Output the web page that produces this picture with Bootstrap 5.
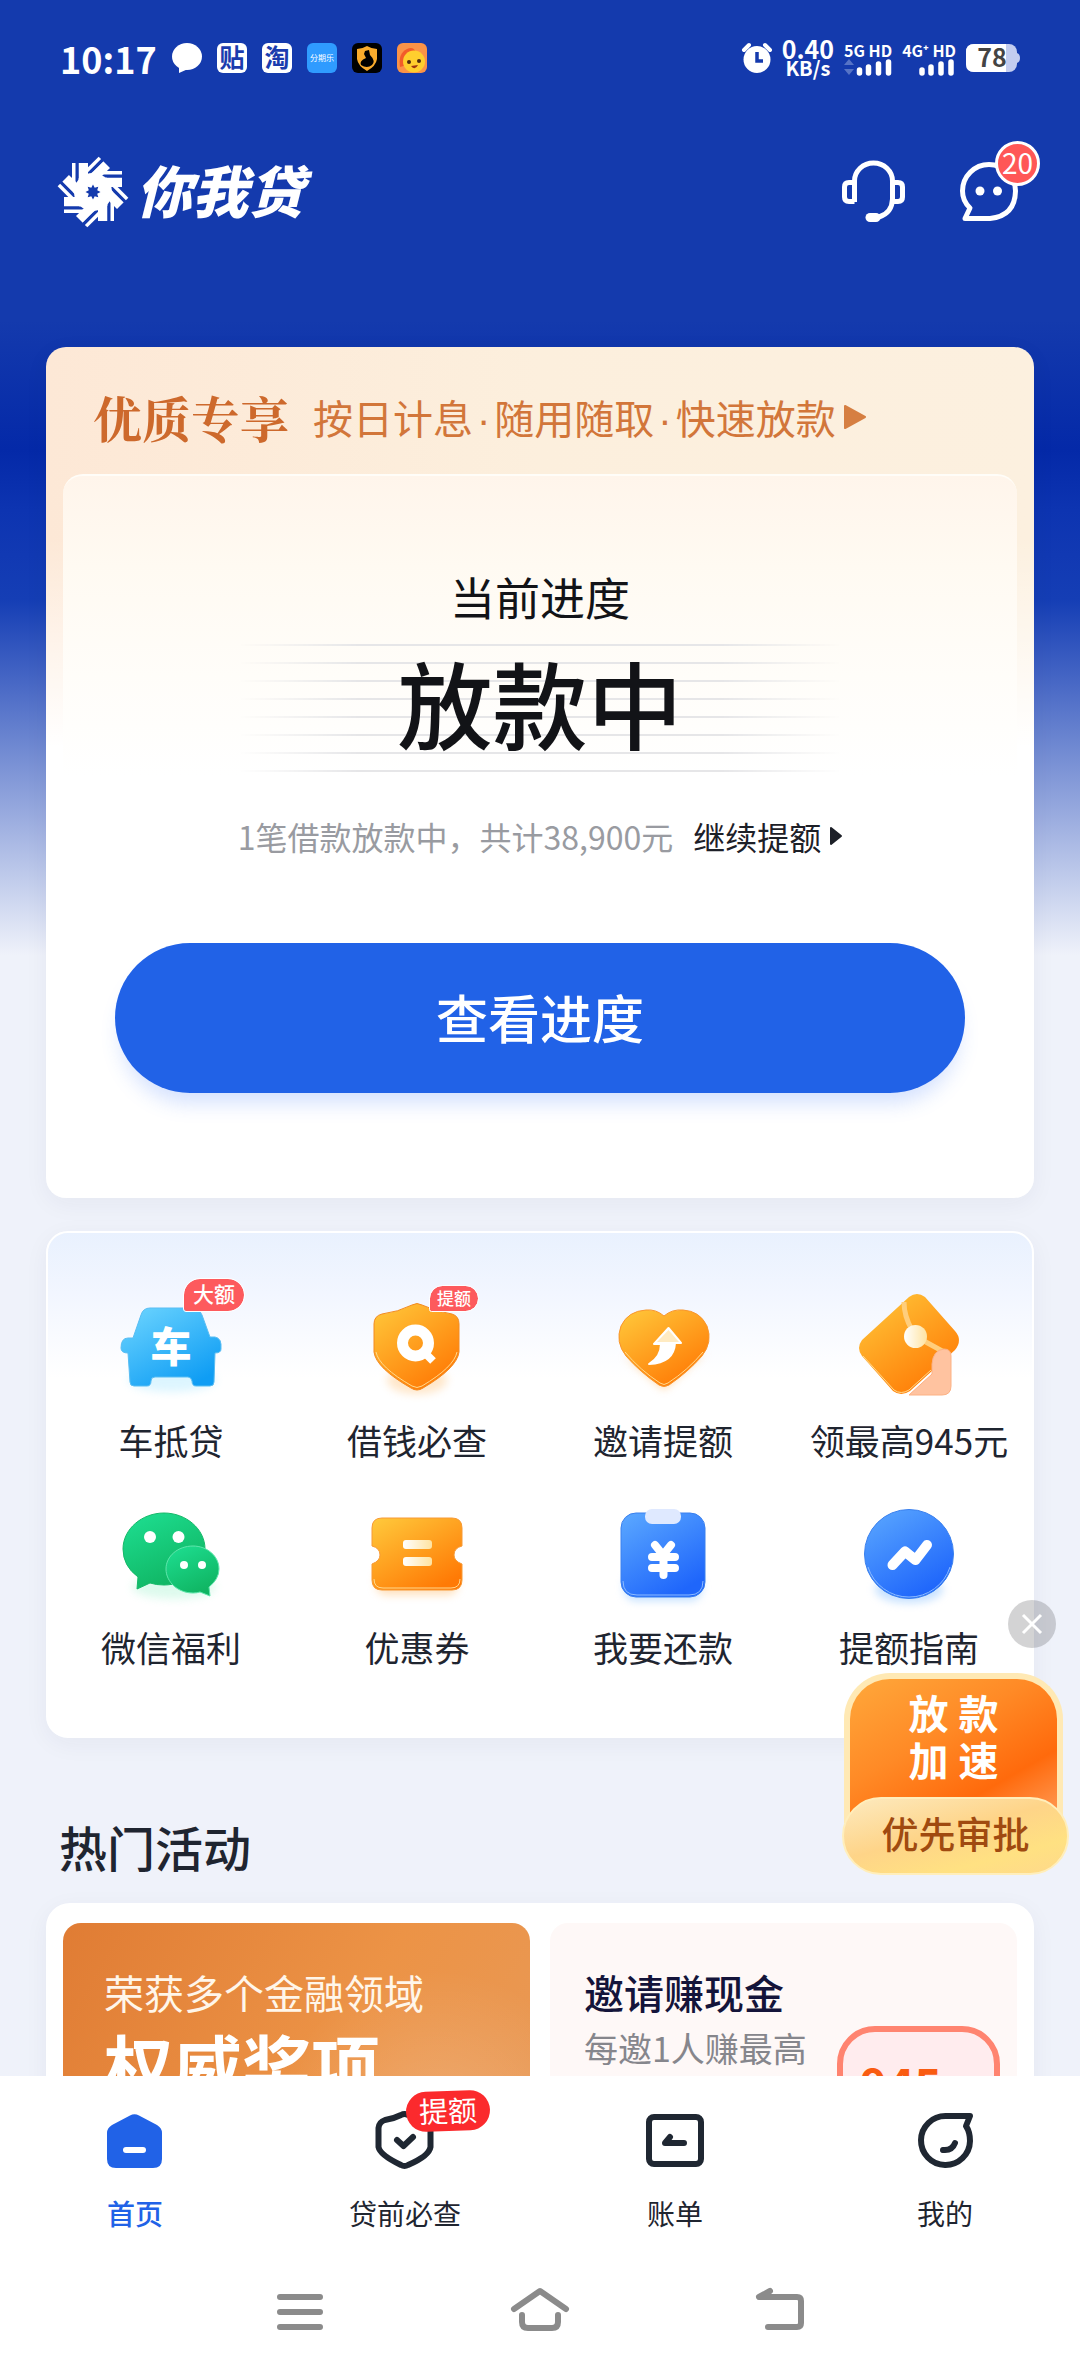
<!DOCTYPE html>
<html lang="zh-CN">
<head>
<meta charset="utf-8">
<meta name="viewport" content="width=device-width, initial-scale=1">
<title>你我贷</title>
<link href="https://cdn.jsdelivr.net/npm/bootstrap@5.3.0/dist/css/bootstrap.min.css" rel="stylesheet">
<style>
  body { font-family: "Noto Sans CJK SC", "Noto Sans", sans-serif; color: #1f2530; background: #eff2fa; }
  a { color: inherit; text-decoration: none; }
  svg { display: block; flex: none; overflow: visible; }
  button { font-family: inherit; }
  .bare-btn { border: 0; background: none; padding: 0; color: inherit; }
  .app-main { min-height: 0; background: #eff2fa linear-gradient(180deg, #143aad 0, #143aad 320px, #0429a8 450px, #0d34b1 510px, #153eb5 600px, #eff2fa 955px) no-repeat; }

  .status-bar { height: 116px; padding: 0 60px; color: #fff; }
  .clock-text { font-size: 36px; font-weight: 700; line-height: 40px; margin-right: 15px; }
  .app-icons { gap: 15px; }
  .sys-status { gap: 10px; }
  .rate-text { font-size: 25px; font-weight: 700; line-height: 20px; text-align: center; }
  .rate-text span { display: block; }
  .rate-text .unit { font-size: 20px; }
  .net-text { font-size: 16px; font-weight: 700; line-height: 18px; }

  .brand-bar { height: 152px; padding: 0 62px 0 58px; color: #fff; }
  .brand-name { font-size: 56px; font-weight: 900; font-style: italic; line-height: 64px; margin: 0 0 6px 8px; }
  .brand-actions { gap: 54px; }
  .count-badge { top: -21px; right: -22px; width: 45px; height: 45px; border: 3px solid #fff; background: #ff5757; font-size: 28px; line-height: 37px; font-weight: 400; text-align: center; }

  .content-wrap { padding: 79px 46px 0; }
  .panel { border-radius: 20px; box-shadow: 0 6px 24px rgba(30, 40, 80, .05); background: #fff; }
  .loan-panel { background: linear-gradient(180deg, rgba(255,255,255,0) 0, rgba(255,255,255,0) 190px, #fff 400px), linear-gradient(90deg, #fde8d6, #fcefdd 50%, #fcf0df); padding: 0 17px 105px; }
  .loan-head { padding: 40px 30px 27px; gap: 24px; line-height: 60px; color: #d2763a; font-size: 40px; white-space: nowrap; }
  .loan-head strong { font-family: "Noto Serif CJK SC", "Noto Serif SC", "Noto Sans CJK SC", serif; font-size: 49px; font-weight: 700; color: #cd692c; }
  .loan-head i { font-family: "Liberation Sans", sans-serif; font-style: normal; line-height: 1; padding: 0 4px; }
  .loan-body { border-radius: 20px 20px 0 0; border-top: 2px solid #fffdf8; padding-top: 91px; background: linear-gradient(180deg, #fff5eb 0, #fffaf2 90px, #fffdf9 200px, #fff 300px); }
  .stage-label { font-size: 45px; line-height: 60px; color: #121317; }
  .stage-box { margin-top: 17px; padding: 0 160px 12px; isolation: isolate; }
  .stage-box::before { content: ""; position: absolute; inset: 0; margin: 0 auto; width: 604px; z-index: -1;
    background: repeating-linear-gradient(180deg, #e6e6e8 0, #e6e6e8 2px, transparent 2px, transparent 18px);
    -webkit-mask-image: linear-gradient(90deg, transparent, #000 20%, #000 80%, transparent); }
  .stage-name { font-size: 95px; line-height: 116px; font-weight: 500; color: #121317; margin: 0; }
  .stage-note { margin: 40px 0 83px; font-size: 32px; line-height: 48px; gap: 20px; color: #999ba1; white-space: nowrap; }
  .stage-note a { color: #1d2028; gap: 9px; }
  .cta { margin: 0 52px; height: 150px; border: 0; background: #2162e7; font-size: 52px; font-weight: 500; line-height: 64px; padding: 0 0 2px; box-shadow: 0 16px 20px -6px rgba(60, 120, 250, .22); color: #fff; }

  .tools-panel { margin-top: 33px; padding: 57px 0 63px; border: 2px solid #fff; border-radius: 22px; background: linear-gradient(180deg, #e9f1fe 0, #f2f6ff 60px, #fff 145px); row-gap: 31px; }
  .tool { font-size: 35px; line-height: 52px; gap: 14px; white-space: nowrap; }
  .tool-tag { left: 68px; top: -11px; height: 32px; border-radius: 16px 16px 16px 2px; background: #fd5a5d; color: #fff; outline: 1px solid #fff; font-size: 21px; font-weight: 500; line-height: 29px; padding: 0 9px; }
  .tool-tag-sm { top: -4px; height: 25px; font-size: 17px; line-height: 23px; padding: 0 7px; }

  .promo { right: -35px; top: 369px; width: 227px; }
  .promo-close { width: 48px; height: 48px; border-radius: 50%; background: rgba(70, 70, 74, .24); margin-right: 13px; }
  .promo-card { margin-top: 25px; display: block; width: 100%; }
  .promo-top { margin: 0 6px 0 2px; height: 150px; border: 6px solid #ffe9b4; border-bottom: 0; border-radius: 46px 46px 0 0; padding-top: 10px; background: linear-gradient(150deg, #ffa83b 0, #ff8a26 40%, #ff6a0c 72%, #ff9046 92%); color: #fff; font-size: 40px; font-weight: 700; line-height: 47px; }
  .promo-top span { display: block; width: 90px; margin: 0 auto; text-align: justify; text-align-last: justify; }
  .promo-foot { margin-top: -26px; height: 78px; border-radius: 39px; border: 2px solid #ffeebb; background: linear-gradient(165deg, #fdeabf 0, #fed488 45%, #ffe182 75%, #fed98a 100%); color: #a04a10; font-size: 37px; font-weight: 500; line-height: 68px; text-align: center; position: relative; }

  .section-title { font-size: 48px; font-weight: 500; line-height: 60px; margin: 78px 0 27px 13px; }
  .activity-panel { padding: 20px 17px; gap: 20px; border-radius: 24px; }
  .tile { height: 280px; border-radius: 18px; padding-top: 45px; white-space: nowrap; font-size: 40px; line-height: 48px; }
  .tile-award { padding-left: 41px; color: #fff6ea; background: radial-gradient(circle at 80% 75%, rgba(255,255,255,.2), transparent 38%), linear-gradient(120deg, #e07c34, #ec9346 55%, #e89a58); }
  .tile-award strong { display: block; font-size: 69px; line-height: 80px; margin-top: 8px; color: #fff; }
  .tile-invite { padding: 45px 17px 0 34px; background: #fef8f7; color: #14143a; }
  .tile-invite h3 { font-size: 40px; line-height: 48px; font-weight: 500; margin: 0 0 8px; }
  .tile-invite p { font-size: 34px; line-height: 48px; color: #86868c; margin: 0; }
  .amount { margin-top: 58px; width: 163px; height: 160px; border: 6px solid #ff8470; border-radius: 38px; background: #ffecee; color: #f95c12; font-size: 46px; font-weight: 700; line-height: 60px; padding: 21px 0 0 17px; }

  .app-nav { background: #fff; padding: 35px 0 45px; position: relative; }
  .app-nav a { font-size: 28px; line-height: 36px; gap: 24px; }
  .app-nav a.current { color: #2162e7; font-weight: 500; }
  .nav-tag { left: 31px; top: -20px; width: 84px; height: 40px; border-radius: 20px; background: #fb2a2d; color: #fff; font-size: 29px; line-height: 37px; text-align: center; transform: rotate(-2deg); }
  .sys-nav { padding: 0 16.66%; }
  .sys-nav button { height: 44px; }
</style>
<script src="https://cdn.jsdelivr.net/npm/bootstrap@5.3.0/dist/js/bootstrap.bundle.min.js"></script>
</head>
<body>
<div class="d-flex flex-column vh-100 overflow-hidden">
  <main class="app-main flex-fill overflow-hidden">

    <div class="status-bar d-flex align-items-center justify-content-between">
      <div class="d-flex align-items-center">
        <span class="clock-text">10:17</span>
        <div class="app-icons d-flex">
          <svg width="30" height="30" viewBox="0 0 30 30"><ellipse cx="15" cy="13.500" rx="15" ry="13.500" fill="#fff"/><path d="M7 23V30L16 26Z" fill="#fff"/></svg>
          <svg width="30" height="30" viewBox="0 0 30 30"><rect width="30" height="30" rx="6" fill="#fff"/><text x="15" y="24" font-size="25" font-weight="700" text-anchor="middle" fill="#1b3cae">贴</text></svg>
          <svg width="30" height="30" viewBox="0 0 30 30"><rect width="30" height="30" rx="6" fill="#fff"/><text x="15" y="24" font-size="25" font-weight="700" text-anchor="middle" fill="#1b3cae">淘</text></svg>
          <svg width="30" height="30" viewBox="0 0 30 30"><rect width="30" height="30" rx="6" fill="#2f9bff"/><text x="15" y="18" font-size="8" text-anchor="middle" fill="#fff">分期乐</text></svg>
          <svg width="30" height="30" viewBox="0 0 30 30"><rect width="30" height="30" rx="6" fill="#000"/><path d="M5 6Q10 6 15 3Q20 6 25 6V16Q24 23 15 28Q6 23 5 16Z" fill="#f9ab2c"/><path d="M13 8L17 7L18 12Q24 18 20 22Q15 26 9 22Q7 18 14 15L12 11Z" fill="#000"/></svg>
          <svg width="30" height="30" viewBox="0 0 30 30"><rect width="30" height="30" rx="6" fill="#fb9347"/><path d="M3 24Q1 10 10 6Q17 3 19 10L10 22Z" fill="#f25c2a"/><circle cx="17" cy="18.500" r="11" fill="#ffce2e"/><circle cx="12" cy="19" r="2" fill="#4b2a10"/><circle cx="22" cy="18" r="2" fill="#4b2a10"/><path d="M14 23Q18 28 21 22Z" fill="#9c3410"/></svg>
        </div>
      </div>
      <div class="sys-status d-flex align-items-center">
        <svg width="30" height="30" viewBox="0 0 30 30"><circle cx="15" cy="16.500" r="13.500" fill="#fff"/><path d="M2 7L7 2M28 7L23 2" stroke="#fff" stroke-width="4" stroke-linecap="round"/><path d="M15 9V18H21" fill="none" stroke="#143aad" stroke-width="3.500"/></svg>
        <div class="rate-text"><span>0.40</span><span class="unit">KB/s</span></div>
        <div class="net-text d-flex flex-column align-items-end"><span>5G HD</span>
          <svg width="48" height="17" viewBox="0 0 48 17"><path d="M5 0L10 6H0ZM5 16L0 10H10Z" fill="#5673c6"/><path d="M15.500 11V14M24.500 8V14M34.500 5V14M44.500 3V14" stroke="#fff" stroke-width="5.500" stroke-linecap="round"/></svg></div>
        <div class="net-text d-flex flex-column align-items-end"><span>4G⁺ HD</span>
          <svg width="38" height="17" viewBox="0 0 38 17"><path d="M4 11V14M13 8V14M23 5V14M33 3V14" stroke="#fff" stroke-width="5.500" stroke-linecap="round"/></svg></div>
        <svg width="54" height="28" viewBox="0 0 54 28"><rect width="51" height="28" rx="8" fill="#c3cdf0"/><path d="M40 0H8Q0 0 0 8V20Q0 28 8 28H40Z" fill="#fff"/><path d="M51 9Q54 10 54 14Q54 18 51 19Z" fill="#c3cdf0"/><text x="26" y="23" font-size="25" font-weight="700" text-anchor="middle" fill="#444">78</text></svg>
      </div>
    </div>

    <header class="brand-bar d-flex align-items-center justify-content-between">
      <div class="d-flex align-items-center">
        <svg width="70" height="70" viewBox="-35 -35 70 70">
          <defs>
            <path id="blade" d="M2 -14.500H29V-5H2Z"/>
            <path id="slit" d="M14 -17.500H31V-14.500H14Z"/>
            <path id="edge" d="M10 -21H29V-17.500H10Z"/>
          </defs>
          <g fill="#fff"><circle r="19"/><use href="#blade"/><use href="#blade" transform="rotate(45)"/><use href="#blade" transform="rotate(90)"/><use href="#blade" transform="rotate(135)"/><use href="#blade" transform="rotate(180)"/><use href="#blade" transform="rotate(225)"/><use href="#blade" transform="rotate(270)"/><use href="#blade" transform="rotate(315)"/></g>
          <g fill="#143aad"><use href="#slit"/><use href="#slit" transform="rotate(45)"/><use href="#slit" transform="rotate(90)"/><use href="#slit" transform="rotate(135)"/><use href="#slit" transform="rotate(180)"/><use href="#slit" transform="rotate(225)"/><use href="#slit" transform="rotate(270)"/><use href="#slit" transform="rotate(315)"/></g>
          <g fill="#fff"><use href="#edge"/><use href="#edge" transform="rotate(45)"/><use href="#edge" transform="rotate(90)"/><use href="#edge" transform="rotate(135)"/><use href="#edge" transform="rotate(180)"/><use href="#edge" transform="rotate(225)"/><use href="#edge" transform="rotate(270)"/><use href="#edge" transform="rotate(315)"/></g>
          <path d="M0 -7.500L1.700 -4.200L5.300 -5.300L4.200 -1.700L7.500 0L4.200 1.700L5.300 5.300L1.700 4.200L0 7.500L-1.700 4.200L-5.300 5.300L-4.200 1.700L-7.500 0L-4.200 -1.700L-5.300 -5.300L-1.700 -4.200Z" fill="#143aad"/>
        </svg>
        <span class="brand-name">你我贷</span>
      </div>
      <div class="brand-actions d-flex align-items-center">
        <button class="bare-btn" aria-label="客服">
          <svg width="64" height="62" viewBox="0 0 64 62" fill="none" stroke="#fff" stroke-width="5"><path d="M12.500 41V20A19 18 0 0 1 50.500 20V38Q50 52 37 56"/><path d="M12.500 21.500H7Q2.500 21.500 2.500 26V36Q2.500 40.500 7 40.500H12.500M50.500 21.500H56Q60.500 21.500 60.500 26V36Q60.500 40.500 56 40.500H50.500"/><path d="M28 56.500H34" stroke-width="9" stroke-linecap="round"/></svg>
        </button>
        <button class="bare-btn position-relative" aria-label="消息">
          <svg width="58" height="60" viewBox="0 0 58 60" fill="none" stroke="#fff" stroke-width="5" stroke-linejoin="round"><path d="M30 56.500H5L10 46Q2.500 39 2.500 29A26.500 26.500 0 0 1 55.500 29Q55 54 30 56.500Z"/><circle cx="20" cy="29" r="4.500" fill="#fff" stroke="none"/><circle cx="37.500" cy="29" r="4.500" fill="#fff" stroke="none"/></svg>
          <span class="count-badge badge rounded-circle p-0 position-absolute">20</span>
        </button>
      </div>
    </header>

    <div class="content-wrap">
      <section class="panel loan-panel">
        <a href="#" class="loan-head d-flex align-items-center">
          <strong>优质专享</strong>
          <span class="d-flex align-items-center gap-2"><span>按日计息<i>·</i>随用随取<i>·</i>快速放款</span>
            <svg width="22" height="24" viewBox="0 0 22 24"><path d="M1 1L21 12L1 23Z" fill="#d67f42" stroke="#d67f42" stroke-width="2" stroke-linejoin="round"/></svg></span>
        </a>
        <div class="loan-body text-center">
          <div class="stage-label">当前进度</div>
          <div class="stage-box position-relative"><h1 class="stage-name">放款中</h1></div>
          <div class="stage-note d-flex justify-content-center">
            <span>1笔借款放款中，共计38,900元</span>
            <a href="#" class="d-flex align-items-center">继续提额
              <svg width="12" height="18" viewBox="0 0 12 18"><path d="M1 1L11 9L1 17Z" fill="#1d2028" stroke="#1d2028" stroke-width="2" stroke-linejoin="round"/></svg></a>
          </div>
          <div class="d-grid"><button class="cta btn rounded-pill">查看进度</button></div>
        </div>
      </section>

      <div class="position-relative">
        <section class="panel tools-panel row g-0">
          <a href="#" class="tool col-3 d-flex flex-column align-items-center">
            <span class="position-relative">
              <svg width="110" height="110" viewBox="0 0 110 110">
                <defs>
                  <linearGradient id="sky" x1="0" y1="0" x2="0.7" y2="1"><stop offset="0" stop-color="#6fd6ff"/><stop offset="1" stop-color="#0f9df4"/></linearGradient>
                  <linearGradient id="amber" x1="0" y1="0" x2="0.7" y2="1"><stop offset="0" stop-color="#ffca3c"/><stop offset="1" stop-color="#ff7a05"/></linearGradient>
                  <linearGradient id="mint" x1="0" y1="0" x2="0.5" y2="1"><stop offset="0" stop-color="#1ee093"/><stop offset="1" stop-color="#10b563"/></linearGradient>
                  <linearGradient id="azure" x1="0" y1="0" x2="0.6" y2="1"><stop offset="0" stop-color="#5ca9ff"/><stop offset="1" stop-color="#1f66fb"/></linearGradient>
                  <linearGradient id="cream" x1="0" y1="0" x2="1" y2="0"><stop offset="0" stop-color="#fff"/><stop offset="1" stop-color="#ffe3a0"/></linearGradient>
                  <filter id="glow" x="-20%" y="-20%" width="140%" height="150%"><feGaussianBlur stdDeviation="4"/></filter>
                </defs>
                <ellipse cx="56" cy="90" rx="44" ry="12" fill="#8fe0ff" opacity=".3" filter="url(#glow)"/>
                <path d="M34 18H76Q83 18 86 25L94 47H99Q106 48 105 59Q105 63 99 63L98 92Q98 96 94 96H80Q76 96 76 91Q75 87 72 87H39Q35 87 35 91Q35 96 31 96H18Q14 96 14 92L12 63Q5 63 5 58Q5 48 12 48H17L25 25Q27 18 34 18Z" fill="url(#sky)" stroke="#59bdf3" stroke-width="1"/>
                <text x="55" y="72" font-size="41" font-weight="900" text-anchor="middle" fill="#fff">车</text>
              </svg>
              <span class="tool-tag position-absolute">大额</span>
            </span>
            车抵贷
          </a>
          <a href="#" class="tool col-3 d-flex flex-column align-items-center">
            <span class="position-relative">
              <svg width="110" height="110" viewBox="0 0 110 110">
                <ellipse cx="55" cy="90" rx="30" ry="14" fill="#ffc27a" opacity=".4" filter="url(#glow)"/>
                <path d="M50 15Q55 12 60 15Q75 22 90 24Q97 26 97 34V62Q95 78 61 98Q55 102 49 98Q14 78 12 62V34Q12 26 20 24Q36 22 50 15Z" fill="url(#amber)" stroke="#f38a20" stroke-width="1"/>
                <path d="M14 62Q17 77 50 96Q55 99 60 96Q92 77 95 62" fill="none" stroke="#ffd98c" stroke-width="1"/>
                <circle cx="53.500" cy="53" r="13" fill="none" stroke="#fff" stroke-width="11"/><path d="M60 60L71 71" stroke="#fff" stroke-width="8"/>
              </svg>
              <span class="tool-tag tool-tag-sm position-absolute">提额</span>
            </span>
            借钱必查
          </a>
          <a href="#" class="tool col-3 d-flex flex-column align-items-center">
            <svg width="110" height="110" viewBox="0 0 110 110">
              <path d="M56 100L16 66Q50 80 98 62Z" fill="#ffc27a" opacity=".6" filter="url(#glow)"/>
              <path d="M56 26Q64 19 75 20Q92 21 99 36Q105 52 94 66Q80 82 61 95Q56 98 51 95Q32 82 18 66Q7 52 13 36Q20 21 38 20Q48 19 56 26Z" fill="url(#amber)" stroke="#f9952c" stroke-width="1"/>
              <path d="M17 62Q32 80 52 93Q56 96 60 93Q80 80 95 62" fill="none" stroke="#ffd98c" stroke-width="1"/>
              <path d="M60.500 38L73 53H67Q66 73 41 74Q53 67 53 54H46Z" fill="#fff" stroke="#fff" stroke-width="2" stroke-linejoin="round"/>
              <path d="M60.500 40L71 52H49Z" fill="#ffe2a8" opacity=".7"/>
            </svg>
            邀请提额
          </a>
          <a href="#" class="tool col-3 d-flex flex-column align-items-center">
            <svg width="110" height="110" viewBox="0 0 110 110">
              <path d="M55 7Q63 1 71 7L101 41Q109 50 101 60L56 101Q47 107 39 101L8 66Q2 58 8 50Z" fill="url(#amber)"/>
              <path d="M9 66L40 100Q47 105 55 100L77 80" fill="none" stroke="#ffd98c" stroke-width="1"/>
              <path d="M50 12Q50 26 58 40M70 51L90 62" fill="none" stroke="#ffce7c" stroke-width="5"/>
              <path d="M55 105L78 84V74Q79 60 90 59Q97 59 97 66V96Q97 105 88 105Z" fill="#ffc3a0" stroke="#fcb184" stroke-width="1"/>
              <circle cx="61.500" cy="46.500" r="11.500" fill="url(#cream)"/>
            </svg>
            领最高945元
          </a>
          <a href="#" class="tool col-3 d-flex flex-column align-items-center">
            <svg width="110" height="110" viewBox="0 0 110 110">
              <ellipse cx="58" cy="90" rx="42" ry="12" fill="#8ff0c4" opacity=".3" filter="url(#glow)"/>
              <path d="M48 16C70 16 89 32 89 52S70 88 48 88Q40 88 34 86L21 92L22 80Q7 69 7 52C7 32 26 16 48 16Z" fill="url(#mint)" stroke="#16b969" stroke-width="1"/>
              <path d="M77 49C91 49 103 59 103 72Q103 82 93 90L94 99L84 95Q81 96 77 96C62 96 50 85 50 72S62 49 77 49Z" fill="url(#mint)" stroke="#5fe6ac" stroke-width="1"/>
              <g fill="#fff"><circle cx="34" cy="40" r="6"/><circle cx="62.500" cy="40" r="6"/><circle cx="68" cy="68" r="4"/><circle cx="86" cy="68" r="4"/></g>
            </svg>
            微信福利
          </a>
          <a href="#" class="tool col-3 d-flex flex-column align-items-center">
            <svg width="110" height="110" viewBox="0 0 110 110">
              <rect x="14" y="70" width="82" height="28" rx="10" fill="#ffc27a" opacity=".5" filter="url(#glow)"/>
              <path d="M20 21H90Q100 21 100 31V49Q92 51 92 58Q92 64 100 67V83Q100 93 90 93H20Q10 93 10 83V67Q18 64 18 58Q18 51 10 49V31Q10 21 20 21Z" fill="url(#amber)" stroke="#f79a36" stroke-width="1"/>
              <path d="M12 82Q12 91 21 91H89Q98 91 98 82" fill="none" stroke="#ffd98c" stroke-width="1"/>
              <rect x="41" y="43" width="29" height="9" rx="3" fill="url(#cream)"/><rect x="41" y="60" width="29" height="9" rx="3" fill="url(#cream)"/>
            </svg>
            优惠券
          </a>
          <a href="#" class="tool col-3 d-flex flex-column align-items-center">
            <svg width="110" height="110" viewBox="0 0 110 110">
              <rect x="16" y="76" width="78" height="28" rx="12" fill="#8fc4ff" opacity=".5" filter="url(#glow)"/>
              <rect x="13" y="16" width="84" height="84" rx="15" fill="url(#azure)" stroke="#3a80ee" stroke-width="1"/>
              <path d="M15 84Q15 98 29 98H81Q95 98 95 84" fill="none" stroke="#8dbcff" stroke-width="1"/>
              <rect x="37" y="12" width="36" height="15" rx="7" fill="#dfe9ff"/>
              <path d="M47 48L55 58L63 48M44 60H67M44 71H67M55.500 58V78" fill="none" stroke="#fff" stroke-width="8" stroke-linecap="round" stroke-linejoin="round"/>
            </svg>
            我要还款
          </a>
          <a href="#" class="tool col-3 d-flex flex-column align-items-center">
            <svg width="110" height="110" viewBox="0 0 110 110">
              <ellipse cx="55" cy="92" rx="34" ry="14" fill="#8fc4ff" opacity=".5" filter="url(#glow)"/>
              <circle cx="55" cy="57" r="44.500" fill="url(#azure)" stroke="#3a80ee" stroke-width="1"/>
              <path d="M14 70A43 43 0 0 0 96 70" fill="none" stroke="#8dbcff" stroke-width="1"/>
              <path d="M38.500 68L51 54.500L61.500 63L73 48" fill="none" stroke="#fff" stroke-width="10" stroke-linecap="round" stroke-linejoin="round"/>
            </svg>
            提额指南
          </a>
        </section>

        <aside class="promo position-absolute d-flex flex-column align-items-end">
          <button class="promo-close bare-btn d-flex align-items-center justify-content-center" aria-label="关闭">
            <svg width="22" height="22" viewBox="0 0 22 22"><path d="M2 2L20 20M20 2L2 20" stroke="#fff" stroke-width="3"/></svg>
          </button>
          <a href="#" class="promo-card">
            <div class="promo-top"><span>放款</span><span>加速</span></div>
            <div class="promo-foot">优先审批</div>
          </a>
        </aside>
      </div>

      <h2 class="section-title">热门活动</h2>
      <section class="panel activity-panel d-flex">
        <a href="#" class="tile tile-award w-50">荣获多个金融领域<strong>权威奖项</strong></a>
        <a href="#" class="tile tile-invite w-50 d-flex justify-content-between">
          <div><h3>邀请赚现金</h3><p>每邀1人赚最高</p></div>
          <div class="amount">945</div>
        </a>
      </section>
    </div>
  </main>

  <footer class="app-nav">
    <nav class="row g-0">
      <a href="#" class="current col-3 d-flex flex-column align-items-center">
        <svg width="60" height="60" viewBox="0 0 60 60"><path d="M25 4.500Q29.500 2 34 4.500L52 14Q57 17 57 22V48Q57 57 48 57H11Q2 57 2 48V22Q2 17 7 14Z" fill="#2162e7"/><path d="M21 39H38" stroke="#fff" stroke-width="6" stroke-linecap="round"/></svg>
        首页
      </a>
      <a href="#" class="col-3 d-flex flex-column align-items-center">
        <span class="position-relative">
          <svg width="60" height="60" viewBox="0 0 60 60" fill="none" stroke="#1f2732" stroke-width="6" stroke-linecap="round" stroke-linejoin="round"><path d="M26 4Q29.500 2 33 4Q41 8 49 9Q55.500 11 55.500 17V36Q54 45 33 54Q29.500 56 26 54Q5 44 3.500 36V17Q4 11 10 9Q18 8 26 4Z"/><path d="M22 29L28.500 35L38 26"/></svg>
          <span class="nav-tag position-absolute">提额</span>
        </span>
        贷前必查
      </a>
      <a href="#" class="col-3 d-flex flex-column align-items-center">
        <svg width="60" height="60" viewBox="0 0 60 60" fill="none" stroke="#1f2732" stroke-width="6" stroke-linecap="round" stroke-linejoin="round"><rect x="4" y="6" width="52" height="47" rx="5"/><path d="M39 32H20L25 26"/></svg>
        账单
      </a>
      <a href="#" class="col-3 d-flex flex-column align-items-center">
        <svg width="60" height="60" viewBox="0 0 60 60" fill="none" stroke="#1f2732" stroke-width="6" stroke-linecap="round" stroke-linejoin="round"><path d="M31 5H55L51 15Q55 21 55 30A24.500 24.500 0 1 1 31 5Z"/><path d="M40 32Q37 40 28 39"/></svg>
        我的
      </a>
    </nav>
    <div class="sys-nav pt-5">
      <div class="row g-0 mt-2">
        <div class="col-4 d-flex justify-content-center"><button class="bare-btn" aria-label="多任务"><svg width="46" height="44" viewBox="0 0 46 44"><path d="M3 10H43M3 25H43M3 40H43" stroke="#8b8b8b" stroke-width="6" stroke-linecap="round"/></svg></button></div>
        <div class="col-4 d-flex justify-content-center"><button class="bare-btn" aria-label="主屏幕"><svg width="58" height="44" viewBox="0 0 58 44" fill="none" stroke="#8b8b8b" stroke-width="6" stroke-linecap="round" stroke-linejoin="round"><path d="M3 22L29 4L55 22M11 28V35Q11 41 17 41H41Q47 41 47 35V28"/></svg></button></div>
        <div class="col-4 d-flex justify-content-center"><button class="bare-btn" aria-label="返回"><svg width="48" height="44" viewBox="0 0 48 44" fill="none" stroke="#8b8b8b" stroke-width="6" stroke-linecap="round" stroke-linejoin="round"><path d="M14 4L3 10H41Q45 10 45 14V36Q45 40 41 40H12"/></svg></button></div>
      </div>
    </div>
  </footer>
</div>
</body>
</html>
